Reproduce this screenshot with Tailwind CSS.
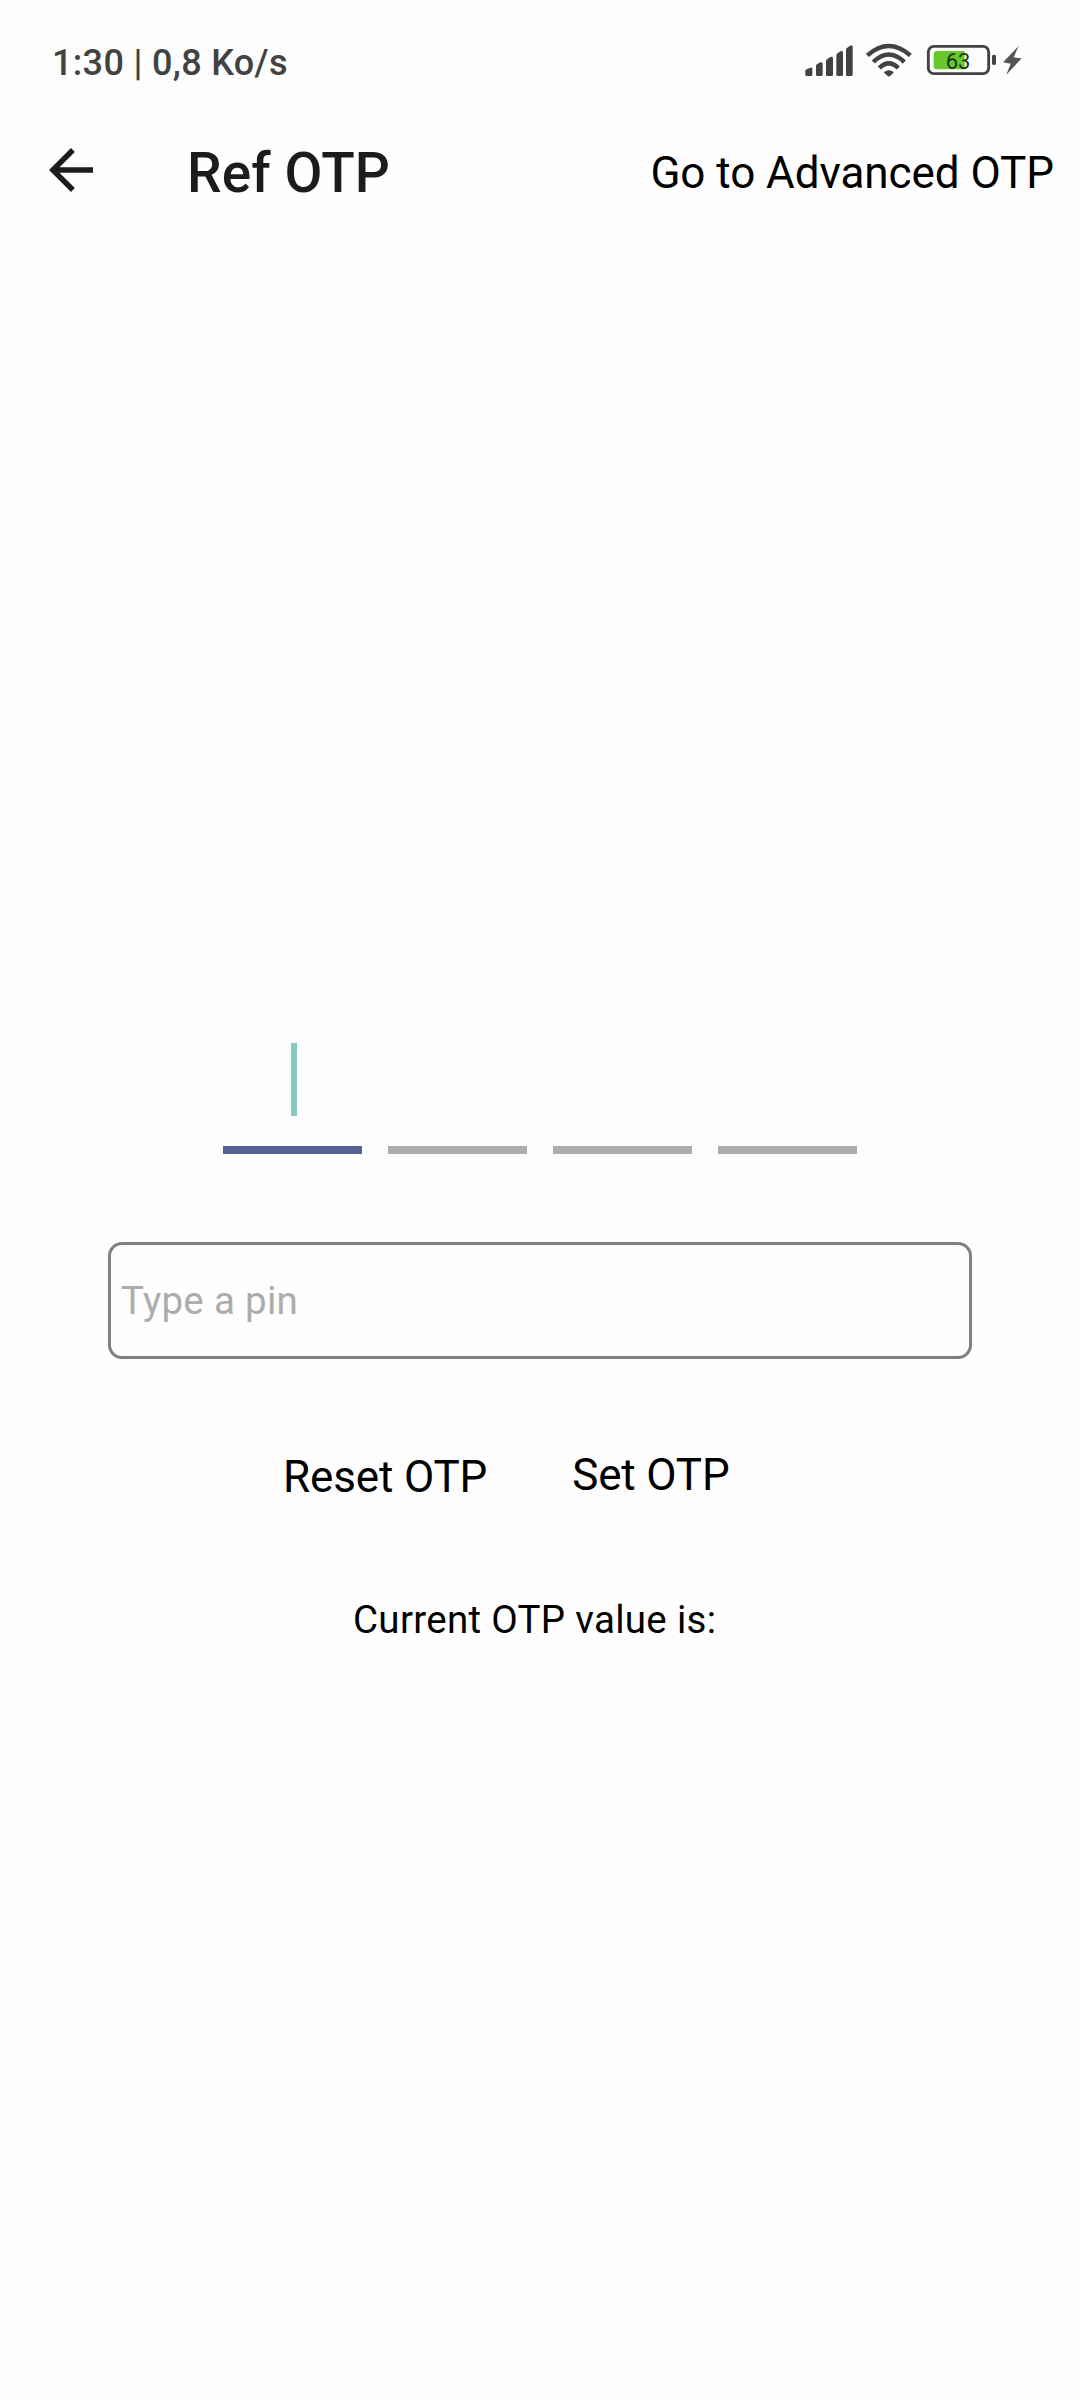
<!DOCTYPE html>
<html lang="en">
<head>
<meta charset="utf-8">
<title>Ref OTP</title>
<script src="https://cdn.jsdelivr.net/npm/@tailwindcss/browser@4"></script>
</head>
<body class="flex h-[2400px] w-[1080px] flex-col overflow-hidden bg-[#fefefe] font-['Roboto',sans-serif] text-black">
  <div class="flex h-[92px] shrink-0 items-start justify-between bg-[#fdfdfd] pr-10 pl-[52px] text-[#424242]">
    <span class="mt-[38px] text-[36px] leading-[50px] font-medium tracking-[0.33px]">1:30 | 0,8 Ko/s</span>
    <svg class="mt-[30px] h-[60px] w-[250px]" viewBox="0 0 750 180" fill="currentColor" aria-hidden="true">
      <path d="M46 124q0-4 4-6l11-5q6-2 6 4v17q0 4-4 4H50q-4 0-4-4z"/>
      <path d="M78 108q0-4 4-6l9-5q7-2 7 4v33q0 4-4 4H82q-4 0-4-4z"/>
      <path d="M108 93q0-4 4-6l9-6q8-2 8 4v49q0 4-4 4h-13q-4 0-4-4z"/>
      <path d="M139 76q0-4 4-6l8-6q8-3 8 4v66q0 4-4 4h-12q-4 0-4-4z"/>
      <path d="M168 59q0-4 4-6l8-6q8-3 8 4v83q0 4-4 4h-12q-4 0-4-4z"/>
      <g fill="none" stroke="currentColor" stroke-width="13.5">
        <path d="M232 76Q296 20 361 76"/>
        <path d="M250 96Q296 51 343 96"/>
        <path d="M268 114Q296 86 325 114"/>
      </g>
      <path d="M283 129q-2-2 0-4q13-9 27 0q2 2 0 4l-11 10q-3 2-5 0z"/>
      <rect x="415" y="49" width="181" height="82" rx="17" fill="none" stroke="currentColor" stroke-width="8.5"/>
      <path d="M440 63h84v55h-84q-9 0-9-9V72q0-9 9-9z" fill="#66c82c"/>
      <rect x="606" y="74" width="12" height="31" rx="5"/>
      <text x="467" y="116" font-size="66" fill="#1d3612">63</text>
      <path d="M686 48L639 97l23 4-13 33 46-49-24-3z" fill="#555"/>
    </svg>
  </div>

  <header class="flex h-[155px] shrink-0 items-center justify-between pr-[26px] pl-[38px]">
    <div class="flex items-center gap-[83px]">
      <svg class="size-[66px]" viewBox="0 0 24 24" fill="#1c1c1e" aria-label="Back">
        <path d="M20 11H7.83l5.59-5.59L12 4l-8 8 8 8 1.41-1.41L7.83 13H20v-2z"/>
      </svg>
      <h1 class="pt-[7px] text-[55px] leading-[64px] font-medium tracking-[0.1px] text-[#1c1c1e]">Ref OTP</h1>
    </div>
    <button class="pt-[6px] text-[44px] leading-[52px] tracking-[-0.05px]">Go to Advanced OTP</button>
  </header>

  <main class="flex grow flex-col">
    <div class="h-4 shrink-0 bg-linear-to-b from-[#fafafa] via-[#fcfcfc] via-30% to-[#fefefe]"></div>
    <div class="mt-[780px] flex gap-[26px] pl-[223px]">
      <div class="flex h-[111px] w-[139px] flex-col justify-between border-b-8 border-[#546193]">
        <div class="ml-[68px] h-[73px] w-1.5 bg-[#85c9c0]"></div>
      </div>
      <div class="h-[111px] w-[139px] border-b-8 border-[#acacac]"></div>
      <div class="h-[111px] w-[139px] border-b-8 border-[#acacac]"></div>
      <div class="h-[111px] w-[139px] border-b-8 border-[#acacac]"></div>
    </div>
    <input type="text" placeholder="Type a pin" class="mx-[108px] mt-[88px] h-[117px] rounded-[14px] border-3 border-[#808080] px-[10px] text-[38.5px] tracking-[0.3px] placeholder:text-[#acacac]">
    <div class="mt-[90px] flex items-start gap-[85px] pl-[283px]">
      <button class="pt-0.5 text-[44px] leading-[52px] tracking-[-0.15px]">Reset OTP</button>
      <button class="text-[44px] leading-[52px] tracking-[-0.15px]">Set OTP</button>
    </div>
    <p class="mt-[94px] pl-[353px] text-[38.5px] leading-[46px] tracking-[0.3px]">Current OTP value is:</p>
  </main>
</body>
</html>
